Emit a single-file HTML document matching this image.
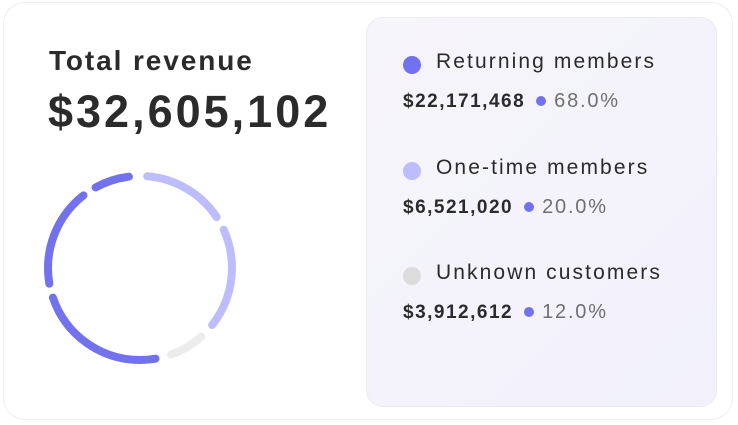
<!DOCTYPE html>
<html><head><style>
body{margin:0;width:738px;height:425px;background:#fff;font-family:"Liberation Sans",sans-serif;color:#2b2b2b;position:relative;overflow:hidden}
.card{position:absolute;left:3px;top:2px;width:730px;height:418px;border:1px solid #eeeef2;border-radius:22px;box-sizing:border-box}
.t1{position:absolute;left:49px;top:45px;font-size:28px;font-weight:700;letter-spacing:1.9px;white-space:nowrap}
.t2{position:absolute;left:48px;top:86px;font-size:45px;font-weight:700;letter-spacing:3px;white-space:nowrap}
.panel{position:absolute;left:366px;top:17px;width:351px;height:390px;border-radius:17px;background:linear-gradient(135deg,#f6f5fa,#f2f1fc);border:1px solid #ebeaf2;box-sizing:border-box}
.lg{position:absolute;left:403px;font-size:21px;}
.lg .d{position:absolute;left:0;top:6px;width:18px;height:18px;border-radius:50%}
.lg .n{position:absolute;left:33px;top:0;white-space:nowrap;letter-spacing:2.1px}
.v{position:absolute;left:403px;font-size:19px;white-space:nowrap}
.v b{font-weight:700;color:#2b2b2b;letter-spacing:1.5px}
.v i{display:inline-block;width:10px;height:10px;border-radius:50%;background:#7272ee;margin:0 8px 2px 11px;vertical-align:middle}
.v span{color:#707070;font-size:20px;letter-spacing:1.8px}
</style></head><body>
<div class="card"></div>
<div class="t1">Total revenue</div>
<div class="t2">$32,605,102</div>
<svg style="position:absolute;left:0;top:0" width="738" height="425">
<g transform="rotate(-90 140 268)" fill="none" stroke-width="8" stroke-linecap="round">
<circle cx="140" cy="268" r="92" pathLength="360" stroke="#bdbdfd" stroke-dasharray="52 400" stroke-dashoffset="-4.5"/>
<circle cx="140" cy="268" r="92" pathLength="360" stroke="#bdbdfd" stroke-dasharray="63 400" stroke-dashoffset="-65.5"/>
<circle cx="140" cy="268" r="92" pathLength="360" stroke="#ececec" stroke-dasharray="22 400" stroke-dashoffset="-138.5"/>
<circle cx="140" cy="268" r="92" pathLength="360" stroke="#7272ee" stroke-dasharray="81 400" stroke-dashoffset="-170.5"/>
<circle cx="140" cy="268" r="92" pathLength="360" stroke="#7272ee" stroke-dasharray="62 400" stroke-dashoffset="-260.5"/>
<circle cx="140" cy="268" r="92" pathLength="360" stroke="#7272ee" stroke-dasharray="22 400" stroke-dashoffset="-331.5"/>
</g></svg>
<div class="panel"></div>
<div class="lg" style="top:50px"><div class="d" style="background:#7272ee"></div><div class="n">Returning members</div></div>
<div class="v" style="top:90px"><b>$22,171,468</b><i></i><span>68.0%</span></div>
<div class="lg" style="top:156px"><div class="d" style="background:#bdbdfd"></div><div class="n">One-time members</div></div>
<div class="v" style="top:196px"><b>$6,521,020</b><i></i><span>20.0%</span></div>
<div class="lg" style="top:261px"><div class="d" style="background:#dcdcde"></div><div class="n">Unknown customers</div></div>
<div class="v" style="top:301px"><b>$3,912,612</b><i></i><span>12.0%</span></div>
</body></html>
